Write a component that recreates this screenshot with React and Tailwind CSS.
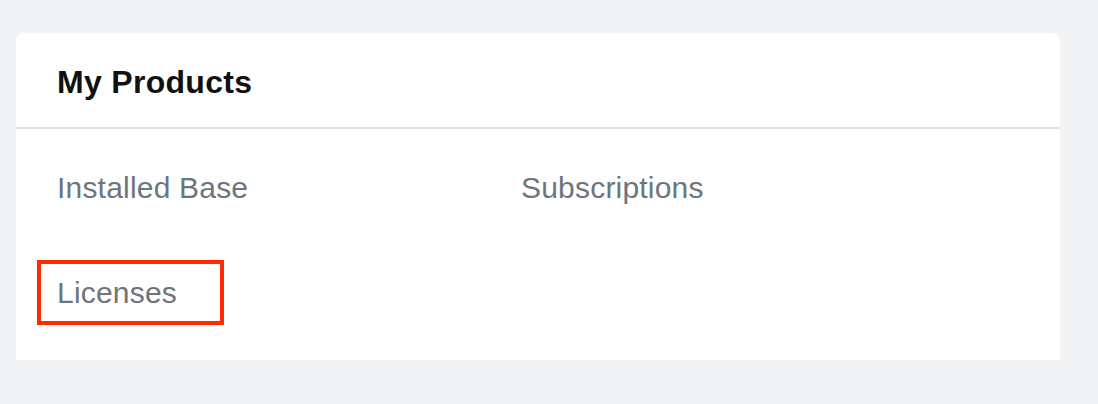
import React from 'react';

const items = ['Installed Base', 'Subscriptions', 'Licenses'];

export default function App() {
  return (
    <div className="w-[1098px] h-[404px] bg-[#f2f3f5] pt-[33px] pl-4" style={{ fontFamily: '"Liberation Sans", Arial, sans-serif' }}>
      <div className="w-[1044px] h-[327px] bg-white rounded-t-lg">
        <div className="h-[96px] flex items-center pt-[4px] px-[41px] border-b-2 border-[#e2e2e2] box-border">
          <h1 className="text-[32px] leading-none font-bold text-[#111] tracking-[0.3px]">My Products</h1>
        </div>
        <div className="grid grid-cols-[464px_1fr] gap-y-[69px] pl-[41px] pt-[41px]">
          {items.map(name => (
            <div key={name} className="text-[30px] leading-[36px] text-[#6d757c] tracking-[0.2px]">
              {name === 'Licenses' ? (
                <span className="relative inline-block">
                  {name}
                  <span className="absolute left-[-20px] right-[-47px] top-[-15px] bottom-[-14px] border-4 border-[#ff2a00]" />
                </span>
              ) : name}
            </div>
          ))}
        </div>
      </div>
    </div>
  );
}
